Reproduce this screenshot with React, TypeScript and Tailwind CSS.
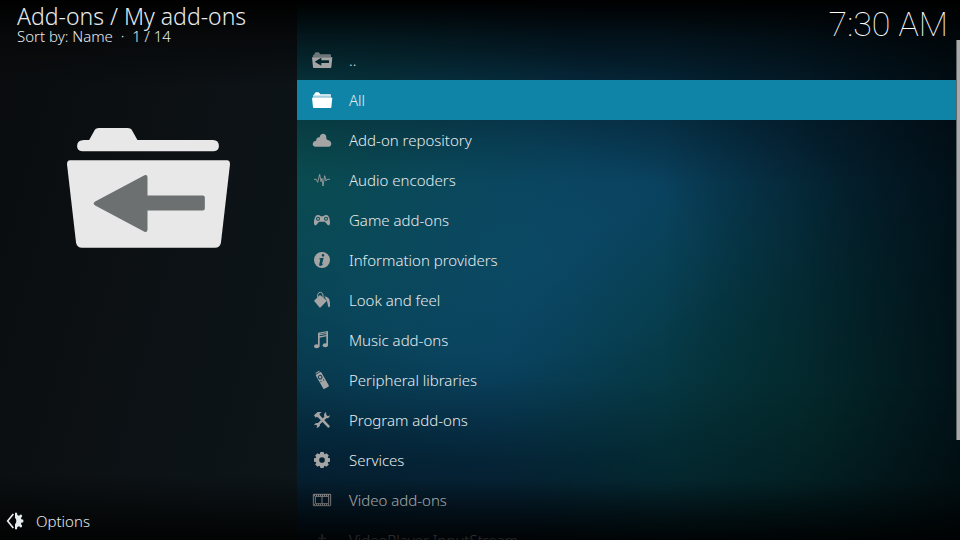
import { useState, type ReactNode } from "react";
import clsx from "clsx";

function Icon({ children }: { children: ReactNode }) {
  return (
    <svg
      width="22"
      height="22"
      viewBox="0 0 66 66"
      fill="currentColor"
      className="shrink-0"
      aria-hidden="true"
    >
      {children}
    </svg>
  );
}

function FolderUpIcon() {
  return (
    <Icon>
      <path d="M6 25v-6q0-2 3-2l3-5q1-2 3-2h7q2 0 3 2l3 4h29q3 0 3 3v6z" opacity="0.65" />
      <path
        fillRule="evenodd"
        d="M3 25h61l-3 30q0 2-3 2H9q-3 0-3-2zM11 38l20 12v-8h23v-8H31v-8z"
      />
    </Icon>
  );
}

function FolderIcon() {
  return (
    <Icon>
      <path d="M9 17l3-5q1-2 3-2h7q2 0 3 2l3 4h29q3 0 3 3v1H6q0-3 3-3z" />
      <path d="M6 20h54v7H6z" opacity="0.6" />
      <path d="M3 26h61l-3 29q0 2-3 2H9q-3 0-3-2z" />
    </Icon>
  );
}

function CloudIcon() {
  return (
    <Icon>
      <path d="M14 53C1 53 3 36 16 35C14 28 22 24 26 25C27 10 47 11 46 26C45 28 47 31 50 33C64 35 64 53 53 53z" />
    </Icon>
  );
}

function WaveIcon() {
  return (
    <Icon>
      <path
        d="M9 31h7l4 9 6-24 4 22 3-10 3 23 5-31 4 16 3-5h9"
        fill="none"
        stroke="currentColor"
        strokeWidth="2.5"
        strokeLinejoin="round"
      />
    </Icon>
  );
}

function GamepadIcon() {
  return (
    <Icon>
      <path
        fillRule="evenodd"
        d="M20 18q6 0 9 4h8q3-4 9-4c8 0 11 14 11 23 0 8-4 9-7 7L42 38H24L16 48c-3 2-7 1-7-7 0-9 3-23 11-23zM21 23a6 6 0 1 0 0 12 6 6 0 0 0 0-12zM45 23a6 6 0 1 0 0 12 6 6 0 0 0 0-12z"
      />
      <circle cx="21" cy="29" r="3" />
      <circle cx="45" cy="29" r="3" />
    </Icon>
  );
}

function InfoIcon() {
  return (
    <Icon>
      <path
        fillRule="evenodd"
        d="M33 9a24 24 0 1 0 0 48 24 24 0 0 0 0-48zM36 15a4 4 0 1 1 0 8 4 4 0 0 1 0-8zM26 28l12-2-5 19q0 2 5-2-4 8-9 8-6 0-4-7l3-12q0-2-4-1z"
      />
    </Icon>
  );
}

function PaintIcon() {
  return (
    <Icon>
      <path d="M9 35L27 18l21 17-19 20q-2 2-4 0z" />
      <path
        d="M20 26v-9q2-8 9-7 6 1 7 8v9"
        fill="none"
        stroke="currentColor"
        strokeWidth="3"
      />
      <path d="M40 22q17 2 17 20v8q0 5-3 5-2 0-3-5-1-14-11-28z" />
    </Icon>
  );
}

function MusicIcon() {
  return (
    <Icon>
      <path
        fillRule="evenodd"
        d="M21 11l30-5v43h-5V22l-20 4v26h-5zM26 14v2l20-4v-2zM26 19v3l20-4v-3z"
      />
      <ellipse cx="17" cy="52" rx="8" ry="6" />
      <ellipse cx="43" cy="49" rx="8" ry="6" />
    </Icon>
  );
}

function RemoteIcon() {
  return (
    <Icon>
      <g transform="rotate(-30 33 34)">
        <path
          fillRule="evenodd"
          d="M24 13q0-3 3-3h13q3 0 3 3v44q0 3-3 3H27q-3 0-3-3zM33 16a7 7 0 1 0 0 14 7 7 0 0 0 0-14zM27 34v3h3v-3zM36 34v3h3v-3z"
        />
        <circle cx="33" cy="23" r="4" />
        <path d="M27 5h13v3H27z" />
      </g>
    </Icon>
  );
}

function ToolsIcon() {
  return (
    <Icon>
      <path d="M9 19L20 9h12l-7 6 3 5 29 32-5 5-30-31-5-3-3 3z" />
      <path d="M45 9q-8 5-5 14L21 42q-9-2-12 7l6-2 4 4-3 6q11-1 11-11l19-18q9 1 11-9l-6 3-5-4z" />
    </Icon>
  );
}

function GearIcon() {
  return (
    <Icon>
      <circle cx="33" cy="33" r="14" fill="none" stroke="currentColor" strokeWidth="11" />
      {[0, 45, 90, 135, 180, 225, 270, 315].map((deg) => (
        <path key={deg} d="M28 9h10l2 9H26z" transform={`rotate(${deg} 33 33)`} />
      ))}
    </Icon>
  );
}

function FilmIcon() {
  return (
    <Icon>
      <g fill="none" stroke="currentColor">
        <path d="M7 16h52v34H7zM13 22h40v22H13zM33 22v22" strokeWidth="3" />
        <path d="M9 19h48M9 47h48" strokeWidth="5" strokeDasharray="3 3" />
      </g>
    </Icon>
  );
}

function InputStreamIcon() {
  return (
    <Icon>
      <path d="M31 16h5v10h9v4h-9v20h-6V30h-9v-4h10z" />
    </Icon>
  );
}

function OptionsIcon() {
  return (
    <svg width="18" height="18" viewBox="0 0 54 54" fill="currentColor" aria-hidden="true">
      <path
        d="M22 6L5 27l17 21"
        fill="none"
        stroke="currentColor"
        strokeWidth="5"
      />
      <path d="M27 2h6l1 7 5 2 6-4 4 5-4 6 1 4 6 1v8l-6 1-1 4 4 6-4 5-6-4-5 2-1 7h-6V36q4-2 4-9t-4-9z" />
    </svg>
  );
}

function BigFolder() {
  return (
    <svg viewBox="0 0 162 120" className="w-full" aria-hidden="true">
      <path
        fill="#e8e8e9"
        d="M15 23q-5 0-5-5 0-6 7-6h5L27 3q1-3 5-3h28q4 0 5 3l5 9h75q6 0 6 6 0 5-5 5z"
      />
      <path
        fill="#e8e8e9"
        d="M3 32h156q3 0 3 4l-9 78q-1 5-6 5H15q-5 0-6-5L0 36q0-4 3-4z"
      />
      <path
        fill="#6c7071"
        d="M28 73L77 47q3-1 3 2v18h55q2 0 2 2v11q0 2-2 2H80v19q0 3-3 2L28 77q-3-2 0-4z"
      />
    </svg>
  );
}

const items = [
  { label: "..", icon: <FolderUpIcon /> },
  { label: "All", icon: <FolderIcon /> },
  { label: "Add-on repository", icon: <CloudIcon /> },
  { label: "Audio encoders", icon: <WaveIcon /> },
  { label: "Game add-ons", icon: <GamepadIcon /> },
  { label: "Information providers", icon: <InfoIcon /> },
  { label: "Look and feel", icon: <PaintIcon /> },
  { label: "Music add-ons", icon: <MusicIcon /> },
  { label: "Peripheral libraries", icon: <RemoteIcon /> },
  { label: "Program add-ons", icon: <ToolsIcon /> },
  { label: "Services", icon: <GearIcon /> },
  { label: "Video add-ons", icon: <FilmIcon /> },
  { label: "VideoPlayer InputStream", icon: <InputStreamIcon /> },
];

export default function App() {
  const [selected, setSelected] = useState("All");

  return (
    <div className="flex h-screen overflow-hidden bg-[#020b10] font-['Noto_Sans',sans-serif] text-[15px] font-light text-[#e6ebed]">
      {/* Side panel */}
      <aside className="flex w-[297px] shrink-0 flex-col bg-[linear-gradient(180deg,#000_0%,#07090b_7%,transparent_16%,transparent_88%,#020303_100%),linear-gradient(105deg,#0a0c0e_0%,#0c1114_50%,#0d161a_100%)]">
        <header className="px-[17px] pt-1">
          <h1 className="text-[23px] leading-6">Add-ons / My add-ons</h1>
          <p className="text-[15px] leading-4 whitespace-pre">{"Sort by: Name  ·  1 / 14"}</p>
        </header>
        <div className="flex flex-1 items-start justify-center px-[67px] pt-21">
          <BigFolder />
        </div>
        <footer className="px-[6px] pb-[7px]">
          <button type="button" className="flex h-6 items-center gap-3">
            <OptionsIcon />
            Options
          </button>
        </footer>
      </aside>

      {/* Add-on list */}
      <main className="relative flex min-w-0 flex-1 flex-col bg-[linear-gradient(180deg,#000_0%,rgba(0,0,0,0.6)_7%,rgba(0,0,0,0.3)_14%,transparent_34%,transparent_70%,rgba(0,0,0,0.35)_100%),linear-gradient(90deg,transparent_55%,rgba(0,8,12,0.25)_75%,rgba(0,8,12,0.75)_100%),radial-gradient(ellipse_50%_50%_at_80%_78%,rgba(4,56,56,0.95)_0%,rgba(4,56,58,0.6)_50%,transparent_100%),radial-gradient(ellipse_45%_55%_at_0%_30%,rgba(10,78,80,0.9)_0%,rgba(10,76,86,0.4)_55%,transparent_100%),radial-gradient(ellipse_75%_55%_at_33%_47%,#0b4866_0%,rgba(10,70,100,0.9)_35%,rgba(7,55,80,0.4)_70%,transparent_100%),linear-gradient(#05283c,#052338)]">
        <div className="flex h-10 shrink-0 items-center justify-end px-3 pt-2">
          <time className="font-['Roboto',sans-serif] text-[34px] leading-10 font-thin text-white">
            7:30 AM
          </time>
        </div>
        <div className="flex min-h-0 flex-1">
          <ul className="min-w-0 flex-1 overflow-hidden">
            {items.map((item) => (
              <li key={item.label}>
                <button
                  type="button"
                  onClick={() => setSelected(item.label)}
                  className={clsx(
                    "flex h-10 w-full items-center gap-4 pl-[14px] text-left",
                    item.label === selected && "bg-[#1084a7]",
                  )}
                >
                  <span className={item.label === selected ? "text-white" : "text-[#a5a4a5]"}>
                    {item.icon}
                  </span>
                  {item.label}
                </button>
              </li>
            ))}
          </ul>
          <div className="w-1">
            <div className="h-[80%] border-l border-[#5c6668] bg-[#a9a9a9]" />
          </div>
        </div>
        {/* Bottom fade */}
        <div className="pointer-events-none absolute inset-x-0 bottom-0 h-15 bg-linear-to-t from-black/85 to-transparent" />
      </main>
    </div>
  );
}
